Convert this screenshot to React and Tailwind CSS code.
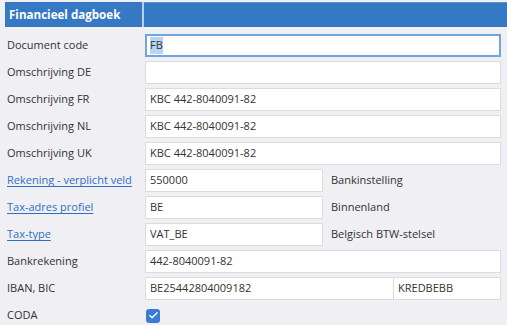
import { Check } from 'lucide-react'

const font = "font-['Open_Sans',_'Liberation_Sans',_sans-serif]"

function Field({ children, className = '' }) {
  return (
    <div className={`h-[23px] bg-white border border-[#dcdcdc] px-[4px] flex items-center text-[11px] text-[#333] ${className}`}>
      {children}
    </div>
  )
}

function Row({ label, link, children }) {
  return (
    <div className="flex items-center h-[23px] mb-[4px]">
      <div className="w-[140px] pl-[2px] text-[11px] shrink-0">
        {link
          ? <a href="#" className="text-[#2f6fc2] underline underline-offset-2">{label}</a>
          : <span className="text-[#333]">{label}</span>}
      </div>
      {children}
    </div>
  )
}

export default function App() {
  return (
    <div className={`min-h-[325px] w-[507px] bg-[#efeff4] pl-[5px] pt-[2px] ${font}`}>
      <div className="flex h-[25px]">
        <div className="w-[137px] bg-[#3578c4] text-white text-[11.6px] font-bold flex items-center pl-[4px]">
          Financieel dagboek
        </div>
        <div className="w-[2px] bg-[#b9cfe9]" />
        <div className="flex-1 bg-[#3578c4] border-t border-[#5b92d0]" />
      </div>

      <div className="mt-[7px] pr-[6px]">
        <Row label="Document code">
          <div className="w-[356px] h-[23px] bg-white border-2 border-[#6ea6e4] px-[3px] flex items-center text-[11px] text-[#333]">
            <span className="bg-[#b7d4f6]">FB</span>
          </div>
        </Row>
        <Row label="Omschrijving DE"><Field className="w-[356px]" /></Row>
        <Row label="Omschrijving FR"><Field className="w-[356px]">KBC 442-8040091-82</Field></Row>
        <Row label="Omschrijving NL"><Field className="w-[356px]">KBC 442-8040091-82</Field></Row>
        <Row label="Omschrijving UK"><Field className="w-[356px]">KBC 442-8040091-82</Field></Row>
        <Row label="Rekening - verplicht veld" link>
          <Field className="w-[178px]">550000</Field>
          <span className="ml-[8px] text-[11px] text-[#333]">Bankinstelling</span>
        </Row>
        <Row label="Tax-adres profiel" link>
          <Field className="w-[178px]">BE</Field>
          <span className="ml-[8px] text-[11px] text-[#333]">Binnenland</span>
        </Row>
        <Row label="Tax-type" link>
          <Field className="w-[178px]">VAT_BE</Field>
          <span className="ml-[8px] text-[11px] text-[#333]">Belgisch BTW-stelsel</span>
        </Row>
        <Row label="Bankrekening"><Field className="w-[356px]">442-8040091-82</Field></Row>
        <Row label="IBAN, BIC">
          <Field className="w-[249px]">BE25442804009182</Field>
          <Field className="w-[107px] border-l-0">KREDBEBB</Field>
        </Row>
        <Row label="CODA">
          <div className="ml-[1px] w-[14px] h-[14px] rounded-[3px] bg-[#3a7bd5] flex items-center justify-center">
            <Check size={11} strokeWidth={3} className="text-white" />
          </div>
        </Row>
      </div>
    </div>
  )
}
